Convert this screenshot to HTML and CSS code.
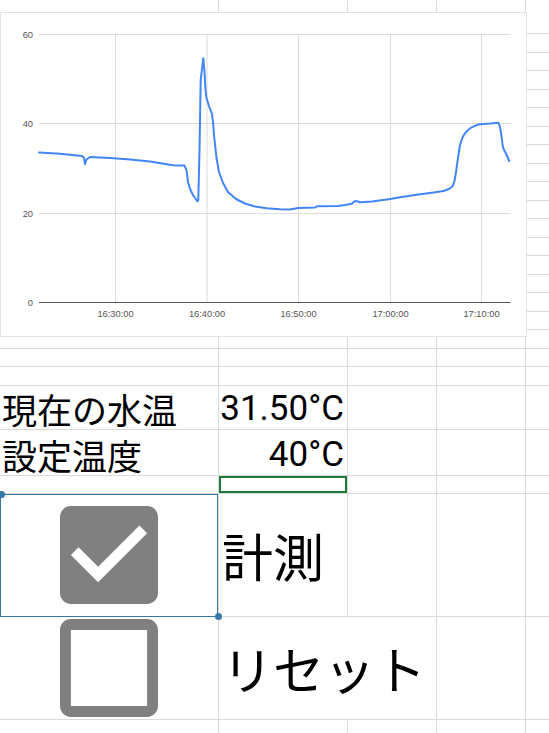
FILE: index.html
```html
<!DOCTYPE html>
<html lang="ja">
<head>
<meta charset="utf-8">
<title>水温管理</title>
<link rel="stylesheet" href="styles.css">
</head>
<body>
<div class="sheet">
  <div class="row r-top"><div class="c a"></div><div class="c b"></div><div class="c cc"></div><div class="c d"></div><div class="c e"></div></div>
  <div class="row"><div class="c a"></div><div class="c b"></div><div class="c cc"></div><div class="c d"></div><div class="c e"></div></div>
  <div class="row"><div class="c a"></div><div class="c b"></div><div class="c cc"></div><div class="c d"></div><div class="c e"></div></div>
  <div class="row"><div class="c a"></div><div class="c b"></div><div class="c cc"></div><div class="c d"></div><div class="c e"></div></div>
  <div class="row"><div class="c a"></div><div class="c b"></div><div class="c cc"></div><div class="c d"></div><div class="c e"></div></div>
  <div class="row"><div class="c a"></div><div class="c b"></div><div class="c cc"></div><div class="c d"></div><div class="c e"></div></div>
  <div class="row"><div class="c a"></div><div class="c b"></div><div class="c cc"></div><div class="c d"></div><div class="c e"></div></div>
  <div class="row"><div class="c a"></div><div class="c b"></div><div class="c cc"></div><div class="c d"></div><div class="c e"></div></div>
  <div class="row"><div class="c a"></div><div class="c b"></div><div class="c cc"></div><div class="c d"></div><div class="c e"></div></div>
  <div class="row"><div class="c a"></div><div class="c b"></div><div class="c cc"></div><div class="c d"></div><div class="c e"></div></div>
  <div class="row"><div class="c a"></div><div class="c b"></div><div class="c cc"></div><div class="c d"></div><div class="c e"></div></div>
  <div class="row"><div class="c a"></div><div class="c b"></div><div class="c cc"></div><div class="c d"></div><div class="c e"></div></div>
  <div class="row"><div class="c a"></div><div class="c b"></div><div class="c cc"></div><div class="c d"></div><div class="c e"></div></div>
  <div class="row"><div class="c a"></div><div class="c b"></div><div class="c cc"></div><div class="c d"></div><div class="c e"></div></div>
  <div class="row"><div class="c a"></div><div class="c b"></div><div class="c cc"></div><div class="c d"></div><div class="c e"></div></div>
  <div class="row"><div class="c a"></div><div class="c b"></div><div class="c cc"></div><div class="c d"></div><div class="c e"></div></div>
  <div class="row"><div class="c a"></div><div class="c b"></div><div class="c cc"></div><div class="c d"></div><div class="c e"></div></div>
  <div class="row"><div class="c a"></div><div class="c b"></div><div class="c cc"></div><div class="c d"></div><div class="c e"></div></div>
  <div class="row"><div class="c a"></div><div class="c b"></div><div class="c cc"></div><div class="c d"></div><div class="c e"></div></div>
  <div class="row r-19"><div class="c a"></div><div class="c b"></div><div class="c cc"></div><div class="c d"></div><div class="c e"></div></div>

  <div class="row r-44">
    <div class="c a txt jp">現在の水温</div>
    <div class="c b txt num">31.50°C</div>
    <div class="c cc"></div><div class="c d"></div><div class="c e"></div>
  </div>
  <div class="row r-46">
    <div class="c a txt jp">設定温度</div>
    <div class="c b txt num">40°C</div>
    <div class="c cc"></div><div class="c d"></div><div class="c e"></div>
  </div>
  <div class="row r-18">
    <div class="c a"></div>
    <div class="c b peer"></div>
    <div class="c cc"></div><div class="c d"></div><div class="c e"></div>
  </div>
  <div class="row r-123">
    <div class="c a box sel">
      <svg class="check" viewBox="3 3 18 18" width="98" height="98"><path d="M19 3H5c-1.11 0-2 .9-2 2v14c0 1.1.89 2 2 2h14c1.11 0 2-.9 2-2V5c0-1.1-.89-2-2-2zm-9 14l-5-5 1.41-1.41L10 14.170l7.59-7.59L19 8l-9 9z"/></svg>
      <span class="handle tl"></span><span class="handle br"></span>
    </div>
    <div class="c b big">計測</div>
    <div class="c cc"></div><div class="c d"></div><div class="c e"></div>
  </div>
  <div class="row r-103">
    <div class="c a box">
      <svg class="check" viewBox="3 3 18 18" width="98" height="98"><path d="M19 5v14H5V5h14m0-2H5c-1.1 0-2 .9-2 2v14c0 1.1.9 2 2 2h14c1.1 0 2-.9 2-2V5c0-1.1-.9-2-2-2z"/></svg>
    </div>
    <div class="c b big spill">リセット</div>
    <div class="c cc"></div><div class="c d"></div><div class="c e"></div>
  </div>
  <div class="row"><div class="c a"></div><div class="c b"></div><div class="c cc"></div><div class="c d"></div><div class="c e"></div></div>

  <div class="chart">
    <svg class="plot" width="527" height="325" viewBox="0 12 527 325">
      <g class="grid">
        <line x1="39" y1="34.5" x2="510.5" y2="34.5"/>
        <line x1="39" y1="123.5" x2="510.5" y2="123.5"/>
        <line x1="39" y1="213.5" x2="510.5" y2="213.5"/>
        <line x1="115.5" y1="34" x2="115.5" y2="302"/>
        <line x1="207" y1="34" x2="207" y2="302"/>
        <line x1="298.5" y1="34" x2="298.5" y2="302"/>
        <line x1="390.5" y1="34" x2="390.5" y2="302"/>
        <line x1="481.5" y1="34" x2="481.5" y2="302"/>
      </g>
      <line class="axis" x1="39" y1="302.5" x2="510.5" y2="302.5"/>
      <g class="lbl ylbl">
        <text x="33" y="38.3">60</text>
        <text x="33" y="127.3">40</text>
        <text x="33" y="217.3">20</text>
        <text x="33" y="306.3">0</text>
      </g>
      <g class="lbl xlbl">
        <text x="115.5" y="316.5">16:30:00</text>
        <text x="207" y="316.5">16:40:00</text>
        <text x="298.5" y="316.5">16:50:00</text>
        <text x="390.5" y="316.5">17:00:00</text>
        <text x="481.5" y="316.5">17:10:00</text>
      </g>
      <polyline class="series" points="39,152.5 60,153.8 82,156 84,158 85,164 86.5,159.5 90,157 110,158 130,159.6 150,161.5 173,165.3 180,165.6 184.5,165.6 186.5,170 188,182 190,189 193,195 197.5,201.5 198.3,200 199.5,150 200.7,80 201.5,73 203.3,58.3 204.5,72 205.5,90 206.5,98 209,106 212,114 213,122 214,135 216.5,158 219,172 223,183 228,192 236,199 245,203.5 255,206.5 266.7,208.3 280,209.3 290,209.5 298.3,208 315,207.5 317,206.3 338,206 345,205 351.7,203.7 355,201 358,201.5 360,202.3 372,201.6 390.3,199 400,197.3 418.3,194.5 432,192.7 443.3,191 449,189 452.5,186.3 454.5,181 456,172 458,158 460,145 462.5,137.5 465,133.3 468,130 471.7,127.3 476,125.3 480,124.2 490,123.5 498.3,122.7 500,127 501.5,136 502.7,146 504,150 506,153.5 509.3,161"/>
    </svg>
  </div>
</div>
</body>
</html>
```

FILE: styles.css
```css
* { box-sizing: border-box; }

html, body {
  margin: 0;
  padding: 0;
  background: #fff;
}

body {
  width: 549px;
  height: 733px;
  overflow: hidden;
  font-family: Roboto, "Noto Sans CJK JP", sans-serif;
  color: #000;
}

.sheet {
  position: relative;
}

/* rows */
.row { display: flex; height: 18.5px; }
.row.r-top { height: 34px; }
.row.r-19 { height: 19px; }
.row.r-44 { height: 44px; }
.row.r-46 { height: 46px; }
.row.r-18 { height: 18px; }
.row.r-123 { height: 123px; }
.row.r-103 { height: 103px; }

/* cells */
.c {
  flex: none;
  position: relative;
  display: flex;
  border-right: 1px solid #dadada;
  border-bottom: 1px solid #dadada;
}
.a { width: 219px; }
.b { width: 129px; }
.cc { width: 89px; }
.d { width: 89px; }
.e { width: 40px; }

/* text cells */
.txt {
  align-items: flex-end;
  padding: 0 3px 3px 2px;
  font-size: 35px;
  line-height: 34px;
  white-space: nowrap;
}
.jp { font-family: "Noto Sans CJK JP", sans-serif; }
.num {
  justify-content: flex-end;
  font-family: Roboto, sans-serif;
}

.big {
  align-items: center;
  padding-left: 3px;
  font-family: "Noto Sans CJK JP", sans-serif;
  font-size: 51px;
  line-height: 51px;
  white-space: nowrap;
}
.spill { border-right: none; }

/* collaborator cursor */
.peer { box-shadow: inset 0 0 0 2px #1e7a36; }

/* checkbox cells */
.box {
  align-items: center;
  justify-content: center;
}
.check { display: block; fill: #808080; }

/* selected cell */
.sel::before {
  content: "";
  position: absolute;
  left: 0;
  top: 0;
  right: 0;
  bottom: -1px;
  border: 1px solid #3479a8;
  z-index: 2;
}
.handle {
  position: absolute;
  width: 7px;
  height: 7px;
  border-radius: 50%;
  background: #3479a8;
  z-index: 3;
}
.handle.tl { left: -2.5px; top: -3.5px; }
.handle.br { right: -3.5px; bottom: -4px; }

/* chart object floating over the grid */
.chart {
  position: absolute;
  left: 0;
  top: 12px;
  width: 527px;
  height: 325px;
  background: #fff;
  box-shadow: inset 0 0 0 1px #e3e3e3;
  z-index: 1;
}
.plot { display: block; }
.grid line { stroke: #dcdcdc; stroke-width: 1; }
.axis { stroke: #555; stroke-width: 1; }
.lbl {
  font-family: "Liberation Sans", Arial, sans-serif;
  font-size: 9.3px;
  fill: #555;
}
.ylbl { text-anchor: end; }
.xlbl { text-anchor: middle; }
.series {
  fill: none;
  stroke: #4285f4;
  stroke-width: 2;
  stroke-linejoin: round;
  stroke-linecap: round;
}
```
